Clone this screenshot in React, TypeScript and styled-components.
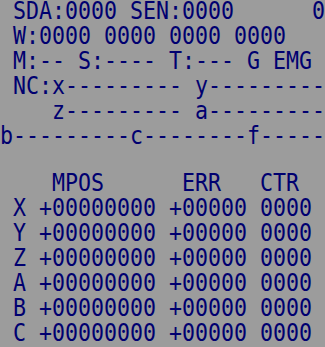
import styled, { createGlobalStyle } from "styled-components";

const GlobalStyle = createGlobalStyle`
  html, body {
    margin: 0;
    padding: 0;
    background: #9c9c9c;
  }
`;

const statusLines = [
  " SDA:0000 SEN:0000      0",
  " W:0000 0000 0000 0000",
  " M:-- S:---- T:--- G EMG",
  " NC:x--------- y---------",
  "    z--------- a---------",
  "b---------c--------f-----",
];

const axes = ["X", "Y", "Z", "A", "B", "C"];

const App = () => {
  return (
    <>
      <GlobalStyle />
      <Screen>
        <Block>
          {statusLines.map((line, i) => (
            <Line key={i}>{line}</Line>
          ))}
        </Block>
        <Spacer />
        <Block>
          <Line>{"    MPOS      ERR   CTR"}</Line>
          {axes.map((axis) => (
            <Line key={axis}>{` ${axis} +00000000 +00000 0000`}</Line>
          ))}
        </Block>
      </Screen>
    </>
  );
};

const Screen = styled.div`
  width: 325px;
  height: 347px;
  overflow: hidden;
  background: #9c9c9c;
  color: #000070;
  font-family: "DejaVu Sans Mono", "Liberation Mono", monospace;
  font-size: 24px;
  line-height: 25px;
  display: flex;
  flex-direction: column;
  margin-top: -1px;
`;

const Block = styled.div`
  display: flex;
  flex-direction: column;
`;

const Spacer = styled.div`
  height: 25px;
`;

// glyphs in the reference are tall and narrow: 13px cell, ~17px caps
const Line = styled.div`
  white-space: pre;
  height: 25px;
  transform: scaleX(0.9);
  transform-origin: left center;
`;

export default App;
